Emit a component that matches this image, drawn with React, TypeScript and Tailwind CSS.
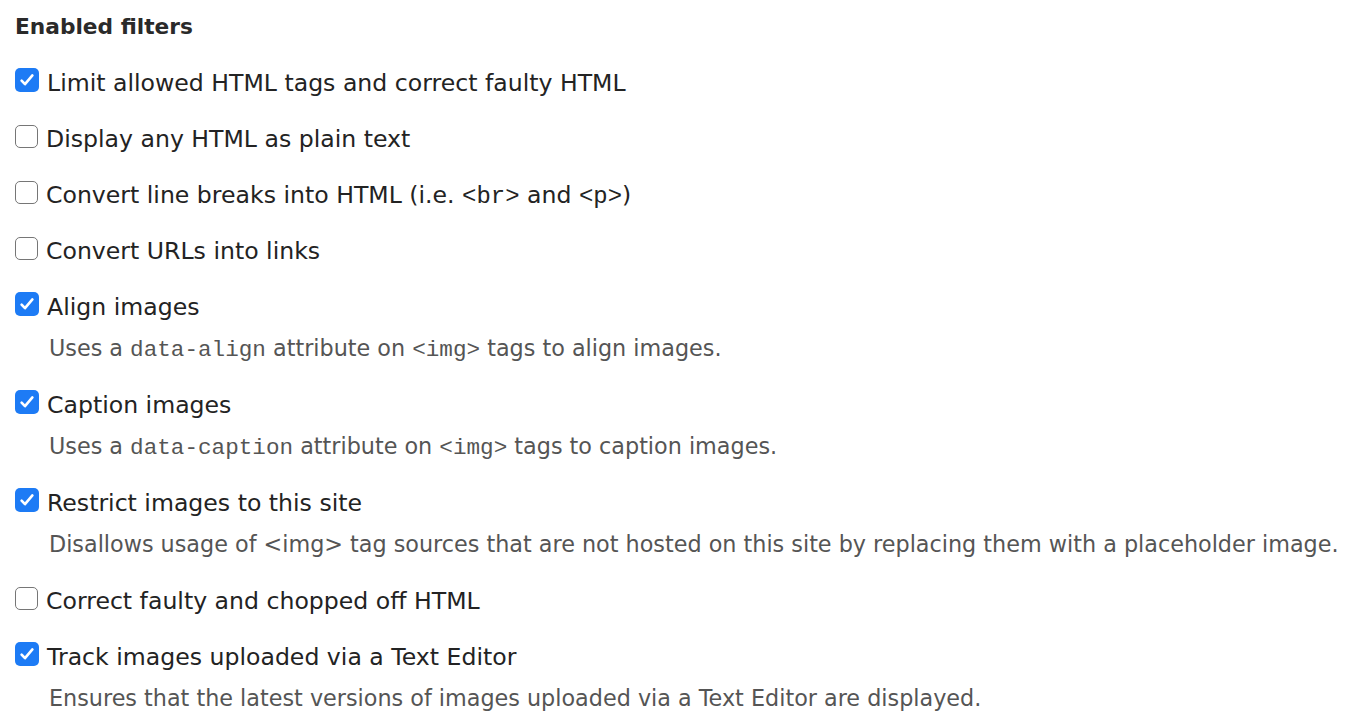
import type { ReactNode } from 'react';

interface Filter {
  label: ReactNode;
  checked: boolean;
  description?: ReactNode;
}

function Code({ children }: { children: ReactNode }) {
  return <code className="font-['Liberation_Mono',monospace] text-[1.015em]">{children}</code>;
}

const FILTERS: Filter[] = [
  { label: 'Limit allowed HTML tags and correct faulty HTML', checked: true },
  { label: 'Display any HTML as plain text', checked: false },
  {
    label: (
      <>
        Convert line breaks into HTML (i.e. <Code>&lt;br&gt;</Code> and <Code>&lt;p&gt;</Code>)
      </>
    ),
    checked: false,
  },
  { label: 'Convert URLs into links', checked: false },
  {
    label: 'Align images',
    checked: true,
    description: (
      <>
        Uses a <Code>data-align</Code> attribute on <Code>&lt;img&gt;</Code> tags to align images.
      </>
    ),
  },
  {
    label: 'Caption images',
    checked: true,
    description: (
      <>
        Uses a <Code>data-caption</Code> attribute on <Code>&lt;img&gt;</Code> tags to caption images.
      </>
    ),
  },
  {
    label: 'Restrict images to this site',
    checked: true,
    description:
      'Disallows usage of <img> tag sources that are not hosted on this site by replacing them with a placeholder image.',
  },
  { label: 'Correct faulty and chopped off HTML', checked: false },
  {
    label: 'Track images uploaded via a Text Editor',
    checked: true,
    description: 'Ensures that the latest versions of images uploaded via a Text Editor are displayed.',
  },
];

function Checkbox({ checked }: { checked: boolean }) {
  if (!checked) {
    return (
      <span className="h-[23px] w-[23px] shrink-0 rounded-[5px] border-[1.5px] border-[#767676] bg-white" />
    );
  }
  return (
    <span className="flex h-[24px] w-[24px] shrink-0 items-center justify-center rounded-[5px] bg-[#1d7bf5]">
      <svg width="16" height="16" viewBox="0 0 16 16" fill="none">
        <path
          d="M2.6 8.6l3.4 3.6L13.4 3.4"
          stroke="white"
          strokeWidth="2.6"
          strokeLinecap="round"
          strokeLinejoin="round"
        />
      </svg>
    </span>
  );
}

export default function App() {
  return (
    <div className="min-h-screen bg-white px-[15px] font-['DejaVu_Sans',sans-serif] text-[#232323]">
      <h2 className="flex h-[54px] items-center text-[21.7px] font-bold text-[#2a2a2a]">Enabled filters</h2>

      <div className="flex flex-col">
        {FILTERS.map((f, i) => (
          <div key={i} className={f.description ? 'mb-[14px]' : ''}>
            {/* Checkbox row */}
            <label className="flex h-[56px] items-center gap-[8px] text-[23.6px]">
              <span className="-mt-[4px] flex">
                <Checkbox checked={f.checked} />
              </span>
              <span className="pt-[4px]">{f.label}</span>
            </label>

            {/* Description */}
            {f.description && (
              <div className="h-[28px] whitespace-nowrap pl-[34px] text-[22.3px] leading-[28px] text-[#555]">
                {f.description}
              </div>
            )}
          </div>
        ))}
      </div>
    </div>
  );
}
